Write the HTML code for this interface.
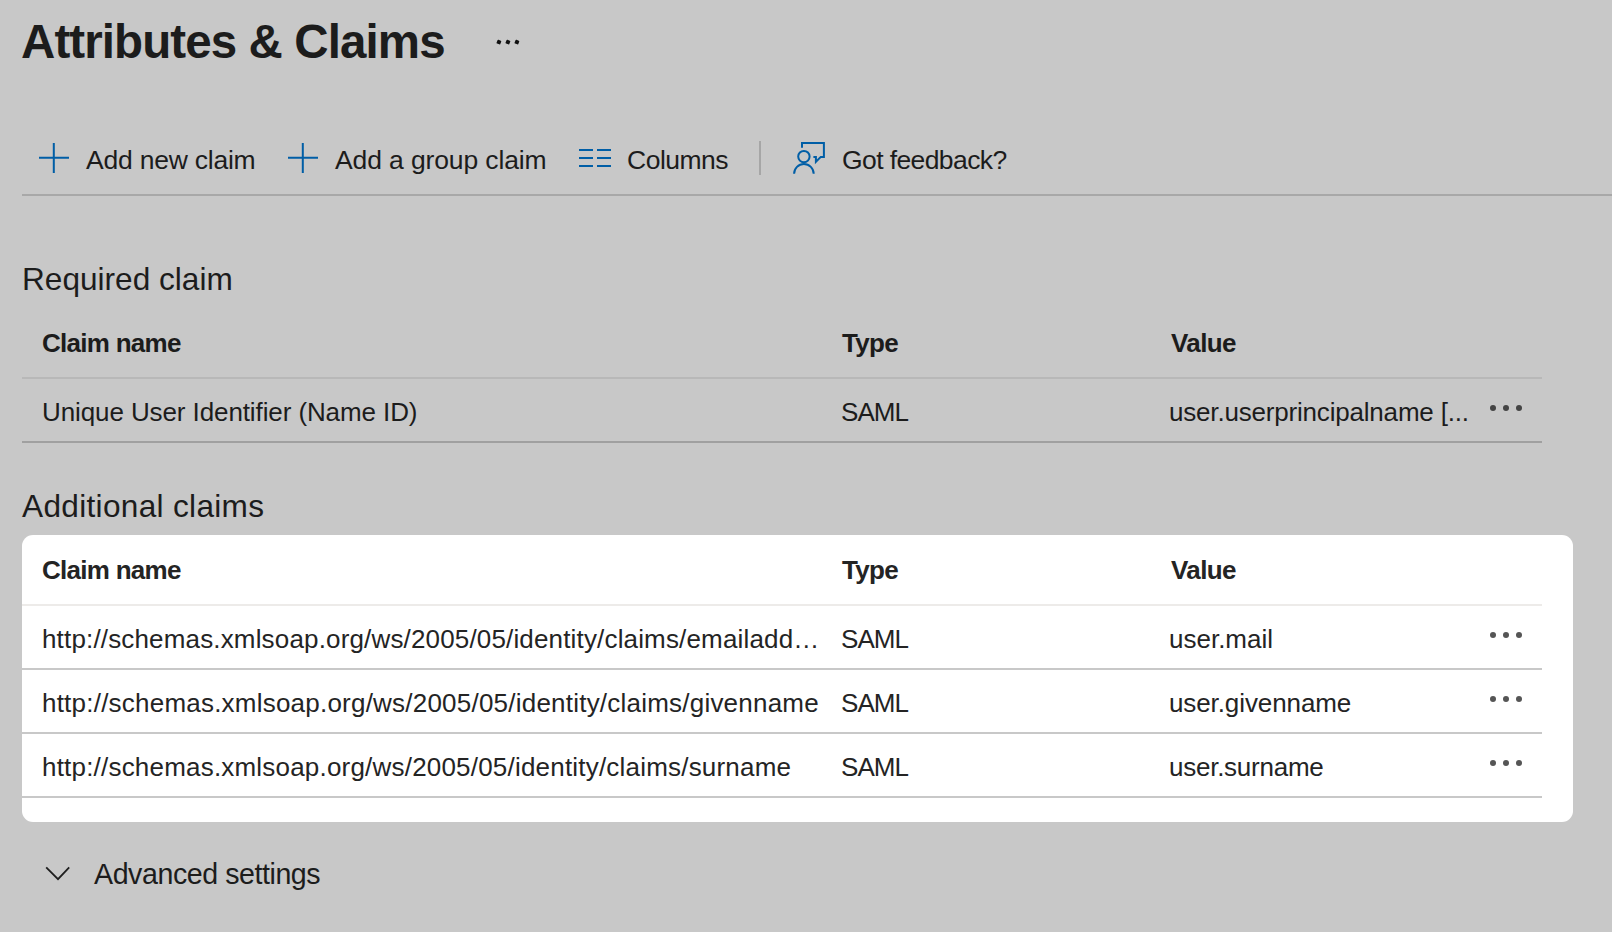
<!DOCTYPE html>
<html>
<head>
<meta charset="utf-8">
<style>
html,body{margin:0;padding:0;}
body{width:1612px;height:932px;overflow:hidden;background:#c8c8c8;position:relative;font-family:"Liberation Sans",sans-serif;color:#1c1c1c;}
.t{position:absolute;white-space:nowrap;}
.w{color:#242424;}
.ln{position:absolute;height:2px;}
.dots{position:absolute;width:6px;height:6px;border-radius:50%;background:#555;}
#box{position:absolute;left:22px;top:535px;width:1551px;height:287px;background:#fff;border-radius:11px;}
</style>
</head>
<body>
<!-- Title -->
<div class="t" style="left:21px;top:17.5px;font-size:47.5px;line-height:47.5px;font-weight:700;letter-spacing:-0.9px;">Attributes &amp; Claims</div>
<div class="t" style="left:497.2px;top:40.3px;width:3.6px;height:3.6px;background:#111;border-radius:0.8px;transform:rotate(22deg);"></div>
<div class="t" style="left:506.2px;top:40.3px;width:3.6px;height:3.6px;background:#111;border-radius:0.8px;transform:rotate(22deg);"></div>
<div class="t" style="left:515.2px;top:40.3px;width:3.6px;height:3.6px;background:#111;border-radius:0.8px;transform:rotate(22deg);"></div>

<!-- Toolbar -->
<svg class="t" style="left:38px;top:142px" width="32" height="32" viewBox="0 0 32 32"><path d="M1 15.7H31M15.8 1V31" stroke="#005ea6" stroke-width="2" fill="none"/></svg>
<div class="t" style="left:86px;top:146.6px;font-size:26.5px;line-height:26.5px;letter-spacing:-0.22px">Add new claim</div>
<svg class="t" style="left:287px;top:142px" width="32" height="32" viewBox="0 0 32 32"><path d="M1 15.7H31M15.8 1V31" stroke="#005ea6" stroke-width="2" fill="none"/></svg>
<div class="t" style="left:335px;top:146.6px;font-size:26.5px;line-height:26.5px;letter-spacing:-0.12px">Add a group claim</div>
<svg class="t" style="left:578px;top:148px" width="34" height="20" viewBox="0 0 34 20"><path d="M1 2H15M1 10H15M1 18H15M19 2H33M19 10H33M19 18H33" stroke="#005ea6" stroke-width="2" fill="none"/></svg>
<div class="t" style="left:627px;top:146.6px;font-size:26.5px;line-height:26.5px;letter-spacing:-0.5px">Columns</div>
<div class="t" style="left:759px;top:141px;width:2px;height:34px;background:#a6a6a6;"></div>
<svg class="t" style="left:790px;top:138px" width="40" height="40" viewBox="0 0 40 40"><g stroke="#005ea6" stroke-width="2" fill="none"><path d="M12 9.8V5.1H33.9V18.9H30.8L25.9 23.8V18.9H23.4"/><circle cx="13.9" cy="18.6" r="5.7"/><path d="M4.1 35.8A9.8 9.8 0 0 1 23.7 35.8"/></g></svg>
<div class="t" style="left:842px;top:146.6px;font-size:26.5px;line-height:26.5px;letter-spacing:-0.6px">Got feedback?</div>
<div class="ln" style="left:22px;top:194px;width:1590px;background:#a8a8a8;"></div>

<!-- Required claim -->
<div class="t" style="left:22px;top:264px;font-size:31.6px;line-height:31.6px;">Required claim</div>
<div class="t" style="left:42px;top:329.8px;font-size:26px;line-height:26px;font-weight:700;letter-spacing:-0.72px">Claim name</div>
<div class="t" style="left:842px;top:329.8px;font-size:26px;line-height:26px;font-weight:700;letter-spacing:-0.67px">Type</div>
<div class="t" style="left:1171px;top:329.8px;font-size:26px;line-height:26px;font-weight:700;letter-spacing:-0.6px">Value</div>
<div class="ln" style="left:22px;top:377px;width:1520px;background:#b8b8b8;"></div>
<div class="t" style="left:42px;top:398.9px;font-size:26px;line-height:26px;letter-spacing:-0.1px">Unique User Identifier (Name ID)</div>
<div class="t" style="left:841px;top:398.9px;font-size:26px;line-height:26px;letter-spacing:-0.93px">SAML</div>
<div class="t" style="left:1169px;top:398.9px;font-size:26px;line-height:26px;letter-spacing:-0.19px">user.userprincipalname [...</div>
<div class="dots" style="left:1490px;top:405px;background:#444;"></div>
<div class="dots" style="left:1503px;top:405px;background:#444;"></div>
<div class="dots" style="left:1516px;top:405px;background:#444;"></div>
<div class="ln" style="left:22px;top:441px;width:1520px;background:#a0a0a0;"></div>

<!-- Additional claims -->
<div class="t" style="left:22px;top:490.9px;font-size:31.6px;line-height:31.6px;letter-spacing:0.31px">Additional claims</div>
<div id="box"></div>
<div class="t w" style="left:42px;top:556.9px;font-size:26px;line-height:26px;font-weight:700;letter-spacing:-0.72px">Claim name</div>
<div class="t w" style="left:842px;top:556.9px;font-size:26px;line-height:26px;font-weight:700;letter-spacing:-0.67px">Type</div>
<div class="t w" style="left:1171px;top:556.9px;font-size:26px;line-height:26px;font-weight:700;letter-spacing:-0.6px">Value</div>
<div class="ln" style="left:22px;top:604px;width:1520px;background:#edebe9;"></div>

<div class="t w" style="left:42px;top:625.6px;font-size:26px;line-height:26px;letter-spacing:0.16px">http://schemas.xmlsoap.org/ws/2005/05/identity/claims/emailadd…</div>
<div class="t w" style="left:841px;top:625.6px;font-size:26px;line-height:26px;letter-spacing:-0.93px">SAML</div>
<div class="t w" style="left:1169px;top:625.6px;font-size:26px;line-height:26px;">user.mail</div>
<div class="dots" style="left:1490px;top:632.2px;"></div>
<div class="dots" style="left:1503px;top:632.2px;"></div>
<div class="dots" style="left:1516px;top:632.2px;"></div>
<div class="ln" style="left:22px;top:667.5px;width:1520px;background:#c8c8c8;"></div>

<div class="t w" style="left:42px;top:689.6px;font-size:26px;line-height:26px;letter-spacing:0.22px">http://schemas.xmlsoap.org/ws/2005/05/identity/claims/givenname</div>
<div class="t w" style="left:841px;top:689.6px;font-size:26px;line-height:26px;letter-spacing:-0.93px">SAML</div>
<div class="t w" style="left:1169px;top:689.6px;font-size:26px;line-height:26px;letter-spacing:-0.1px;">user.givenname</div>
<div class="dots" style="left:1490px;top:696.2px;"></div>
<div class="dots" style="left:1503px;top:696.2px;"></div>
<div class="dots" style="left:1516px;top:696.2px;"></div>
<div class="ln" style="left:22px;top:732px;width:1520px;background:#c8c8c8;"></div>

<div class="t w" style="left:42px;top:754px;font-size:26px;line-height:26px;letter-spacing:0.2px">http://schemas.xmlsoap.org/ws/2005/05/identity/claims/surname</div>
<div class="t w" style="left:841px;top:754px;font-size:26px;line-height:26px;letter-spacing:-0.93px">SAML</div>
<div class="t w" style="left:1169px;top:754px;font-size:26px;line-height:26px;letter-spacing:-0.25px;">user.surname</div>
<div class="dots" style="left:1490px;top:760.2px;"></div>
<div class="dots" style="left:1503px;top:760.2px;"></div>
<div class="dots" style="left:1516px;top:760.2px;"></div>
<div class="ln" style="left:22px;top:796px;width:1520px;background:#c8c8c8;"></div>

<!-- Advanced settings -->
<svg class="t" style="left:44px;top:864px" width="28" height="18" viewBox="0 0 28 18"><path d="M2.2 3.3L14 15.1L25.2 3.3" stroke="#1f1f1f" stroke-width="1.8" fill="none"/></svg>
<div class="t" style="left:94px;top:859.5px;font-size:28.6px;line-height:28.6px;letter-spacing:-0.44px">Advanced settings</div>
</body>
</html>
